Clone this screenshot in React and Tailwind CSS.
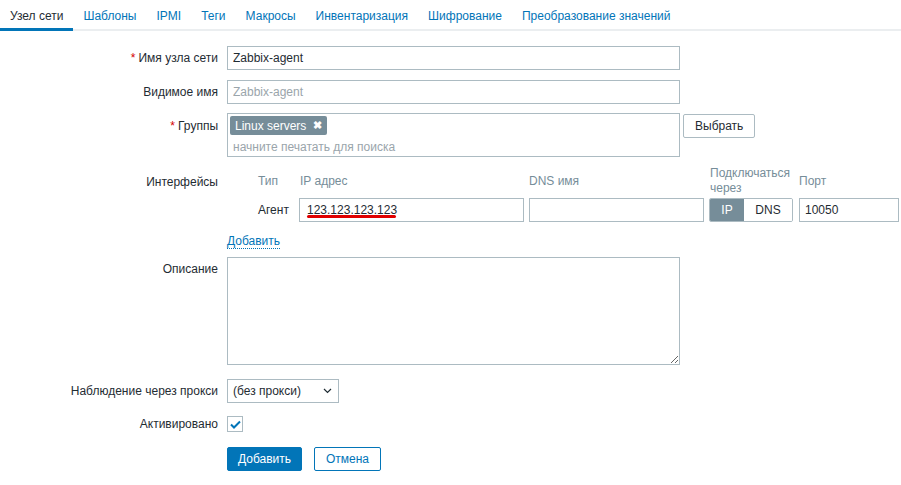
import React from "react";

const tabs = ["Узел сети", "Шаблоны", "IPMI", "Теги", "Макросы", "Инвентаризация", "Шифрование", "Преобразование значений"];

const Label = ({ children, required, className = "" }) => (
    <div className={`text-right text-[#1f2c33] leading-[24px] ${className}`}>
        {required && <span className="text-[#d40000] mr-[3px]">*</span>}
        {children}
    </div>
);

const inputCls = "h-[24px] border border-[#acbbc2] bg-white px-[5px] text-[12px] text-[#1f2c33] outline-none";

export default function App() {
    return (
        <div className="w-[901px] h-[485px] bg-white text-[12px] text-[#1f2c33] overflow-hidden" style={{ fontFamily: '"Liberation Sans", Arial, sans-serif' }}>
            {/* Tabs */}
            <div className="flex border-b-2 border-[#ebeef0] h-[31px]">
                {tabs.map((t, i) => (
                    <div
                        key={t}
                        className={`px-[10px] pt-[7px] -mb-[2px] ${i === 0 ? "text-[#1f2c33] border-b-[3px] border-[#0275b8]" : "text-[#0275b8]"}`}
                    >
                        {t}
                    </div>
                ))}
            </div>

            <div className="grid grid-cols-[218px_1fr] gap-x-[9px] mt-[15px]">
                {/* Host name */}
                <Label required>Имя узла сети</Label>
                <div>
                    <input className={`${inputCls} w-[453px]`} defaultValue="Zabbix-agent" />
                </div>

                {/* Visible name */}
                <Label className="mt-[10px]">Видимое имя</Label>
                <div className="mt-[10px]">
                    <input className={`${inputCls} w-[453px] placeholder:text-[#9aa5ab]`} placeholder="Zabbix-agent" />
                </div>

                {/* Groups */}
                <Label required className="mt-[9px] leading-[26px]">Группы</Label>
                <div className="mt-[9px] flex items-start gap-[3px]">
                    <div className="w-[453px] h-[44px] border border-[#acbbc2] px-[2px] pt-[2px]">
                        <span className="inline-flex items-center h-[19px] bg-[#768d99] text-white rounded-[2px] pl-[5px] pr-[5px]">
                            Linux servers
                            <span className="ml-[7px] font-bold text-[11px] leading-none">✖</span>
                        </span>
                        <div className="text-[#9aa5ab] pl-[3px] mt-[3px]">начните печатать для поиска</div>
                    </div>
                    <button className="h-[24px] px-[11px] mt-[1px] border border-[#acbbc2] rounded-[2px] bg-white text-[#1f2c33]">Выбрать</button>
                </div>

                {/* Interfaces */}
                <div className="text-right mt-[9px] pt-[7px]">Интерфейсы</div>
                <div className="mt-[9px]">
                    <div className="flex items-center h-[29px] text-[#768d99]">
                        <div className="w-[72px] pl-[31px]">Тип</div>
                        <div className="w-[230px] pl-[1px]">IP адрес</div>
                        <div className="w-[180px]">DNS имя</div>
                        <div className="w-[90px] leading-[15px] pl-[1px]">Подключаться<br />через</div>
                        <div>Порт</div>
                    </div>
                    <div className="flex items-center mt-[3px]">
                        <div className="w-[72px] pl-[31px]">Агент</div>
                        <div className="relative">
                            <input className={`${inputCls} w-[225px] pl-[7px]`} defaultValue="123.123.123.123" />
                            <div className="absolute left-[8px] top-[17px] w-[89px] h-[3px] rounded-full bg-[#e00000]" />
                        </div>
                        <input className={`${inputCls} w-[175px] ml-[5px]`} />
                        <div className="flex ml-[5px] h-[24px] rounded-[2px] overflow-hidden border border-[#acbbc2]">
                            <div className="w-[34px] bg-[#768d99] text-white flex items-center justify-center">IP</div>
                            <div className="w-[48px] bg-white flex items-center justify-center">DNS</div>
                        </div>
                        <input className={`${inputCls} w-[100px] ml-[6px]`} defaultValue="10050" />
                    </div>
                    <div className="mt-[10px] h-[16px]">
                        <span className="text-[#0275b8] border-b border-dotted border-[#0275b8]">Добавить</span>
                    </div>
                </div>

                {/* Description */}
                <Label className="mt-[9px]">Описание</Label>
                <div className="mt-[9px]">
                    <textarea className="block w-[453px] h-[108px] border border-[#acbbc2] outline-none" />
                </div>

                {/* Proxy */}
                <Label className="mt-[14px]">Наблюдение через прокси</Label>
                <div className="mt-[14px]">
                    <div className="relative w-[112px] h-[24px] border border-[#acbbc2] flex items-center pl-[5px]">
                        (без прокси)
                        <svg className="absolute right-[6px] top-[8px]" width="9" height="6" viewBox="0 0 9 6">
                            <path d="M1 1 L4.5 4.5 L8 1" fill="none" stroke="#1f2c33" strokeWidth="1.2" />
                        </svg>
                    </div>
                </div>

                {/* Enabled */}
                <Label className="mt-[9px]">Активировано</Label>
                <div className="mt-[9px] flex items-center h-[24px]">
                    <div className="w-[16px] h-[16px] border border-[#acbbc2] flex items-center justify-center">
                        <svg width="11" height="9" viewBox="0 0 11 9">
                            <path d="M1 4.5 L4 7.5 L10 1.5" fill="none" stroke="#0275b8" strokeWidth="2" />
                        </svg>
                    </div>
                </div>

                {/* Buttons */}
                <div />
                <div className="mt-[11px] flex gap-[12px]">
                    <button className="h-[24px] w-[75px] bg-[#0275b8] border border-[#0275b8] rounded-[2px] text-white">Добавить</button>
                    <button className="h-[24px] w-[67px] bg-white border border-[#0275b8] rounded-[2px] text-[#0275b8]">Отмена</button>
                </div>
            </div>
        </div>
    );
}
